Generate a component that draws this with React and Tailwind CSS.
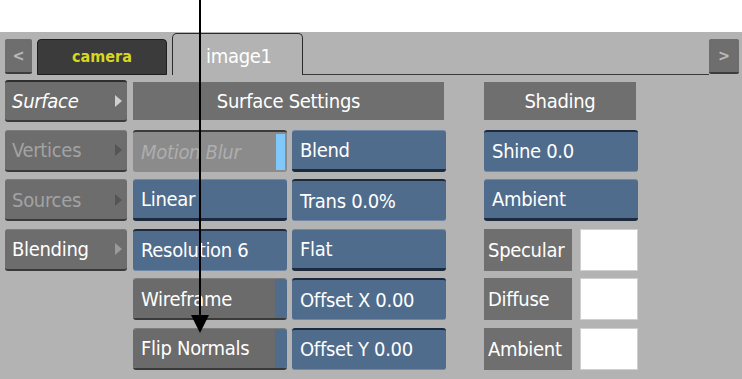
import React from 'react';

const font = { fontFamily: '"DejaVu Sans Condensed", "DejaVu Sans", sans-serif' };

const Tri = ({ color }) => (
  <span
    className="w-0 h-0 border-y-[6px] border-y-transparent border-l-[7px]"
    style={{ borderLeftColor: color }}
  />
);

const SideButton = ({ label, active, dim, italic }) => (
  <div
    className={`h-[42px] flex items-center justify-between pl-[7px] pr-[5px] rounded-[3px] bg-[#6d6d6d] border-b-2 border-b-[#3a3a3a] ${
      active ? 'border-t-2 border-t-[#2e2e2e]' : 'border-t border-t-[#7c7c7c]'
    }`}
  >
    <span
      className={`text-[20px] tracking-[-0.3px] ${italic ? 'italic' : ''} ${dim ? 'text-[#a3a3a3]' : 'text-white'}`}
    >
      {label}
    </span>
    <Tri color={dim ? '#555555' : active ? '#cfcfcf' : '#9a9a9a'} />
  </div>
);

const BlueButton = ({ label, pressed }) => (
  <div
    className={`h-[42px] flex items-center pl-[8px] rounded-[3px] bg-[#506c8c] text-white text-[20px] tracking-[-0.3px] ${
      pressed
        ? 'border-t-2 border-t-[#1d2a3d] border-b border-b-[#6f88a6]'
        : 'border-t border-t-[#6f88a6] border-b-[3px] border-b-[#1d2a3d]'
    }`}
  >
    {label}
  </div>
);

const GrayToggle = ({ label }) => (
  <div className="h-[42px] flex rounded-[3px] overflow-hidden border-b-2 border-b-[#3a3a3a] border-t border-t-[#7d7d7d]">
    <div className="flex-1 flex items-center pl-[8px] bg-[#6b6b6b] text-white text-[20px] tracking-[-0.3px]">{label}</div>
    <div className="w-[12px] bg-[#506c8c]" />
  </div>
);

const ColorRow = ({ label }) => (
  <div className="h-[42px] flex gap-[8px]">
    <div className="w-[88px] flex items-center pl-[4px] bg-[#6f6f6f] text-white text-[20px] tracking-[-0.3px]">{label}</div>
    <div className="flex-1 bg-white border border-[#cfcfcf]" />
  </div>
);

export default function App() {
  return (
    <div className="relative w-[742px] h-[379px] bg-white overflow-hidden" style={font}>
      <div className="mt-[32px] h-[347px] bg-[#b3b3b3]">
        {/* tab row */}
        <div className="h-[43px] flex items-end pl-[5px] pr-[3px]">
          <div className="w-[27px] h-[35px] mb-[1px] flex items-center justify-center bg-[#6e6e6e] rounded-[2px] border-b-2 border-b-[#3d3d3d] text-[#b8b8b8] text-[16px] font-bold">
            &lt;
          </div>
          <div className="ml-[5px] w-[130px] h-[36px] flex items-center justify-center bg-[#3b3b3b] rounded-t-[4px] border border-[#1e1e1e] text-[#d6d81e] text-[16px] font-bold">
            camera
          </div>
          <div className="ml-[5px] w-[131px] h-[42px] flex items-center pl-[33px] pt-[3px] bg-[#b3b3b3] rounded-t-[5px] border border-b-0 border-[#2b2b2b] text-white text-[20px] tracking-[-0.3px]">
            image1
          </div>
          <div className="flex-1 border-b border-[#3a3a3a] h-full" />
          <div className="w-[30px] h-[35px] mb-[1px] flex items-center justify-center bg-[#6e6e6e] rounded-[2px] border-b-2 border-b-[#3d3d3d] text-[#b8b8b8] text-[16px] font-bold">
            &gt;
          </div>
        </div>

        {/* body */}
        <div className="mt-[5px] flex pl-[5px]">
          <div className="w-[122px] flex flex-col gap-[7.5px]">
            <SideButton label="Surface" active italic />
            <SideButton label="Vertices" dim />
            <SideButton label="Sources" dim />
            <SideButton label="Blending" />
          </div>

          <div className="ml-[6px] w-[313px] flex flex-col gap-[7.5px]">
            <div className="h-[42px] flex items-center">
              <div className="w-[311px] h-[38px] flex items-center justify-center bg-[#6f6f6f] text-white text-[20px] tracking-[-0.3px]">
                Surface Settings
              </div>
            </div>
            <div className="grid grid-cols-[154px_154px] gap-x-[5px] gap-y-[7.5px]">
              <div className="h-[42px] flex rounded-[3px] overflow-hidden bg-[#8b8b8b] border-t-2 border-t-[#3b3b3b]">
                <div className="flex-1 flex items-center pl-[8px] italic text-[#aeaeae] text-[20px] tracking-[-0.3px]">Motion Blur</div>
                <div className="w-[9px] my-[2px] mr-[2px] bg-[#80c8fa]" />
              </div>
              <BlueButton label="Blend" />
              <BlueButton label="Linear" />
              <BlueButton label="Trans 0.0%" pressed />
              <BlueButton label="Resolution 6" pressed />
              <BlueButton label="Flat" />
              <GrayToggle label="Wireframe" />
              <BlueButton label="Offset X 0.00" pressed />
              <GrayToggle label="Flip Normals" />
              <BlueButton label="Offset Y 0.00" pressed />
            </div>
          </div>

          <div className="ml-[38px] w-[154px] flex flex-col gap-[7.5px]">
            <div className="h-[42px] flex items-center">
              <div className="w-[152px] h-[38px] flex items-center justify-center bg-[#6f6f6f] text-white text-[20px] tracking-[-0.3px]">
                Shading
              </div>
            </div>
            <BlueButton label="Shine 0.0" pressed />
            <BlueButton label="Ambient" />
            <ColorRow label="Specular" />
            <ColorRow label="Diffuse" />
            <ColorRow label="Ambient" />
          </div>
        </div>
      </div>

      {/* callout arrow */}
      <svg className="absolute left-0 top-0" width="742" height="379">
        <line x1="200" y1="0" x2="200" y2="318" stroke="#000" strokeWidth="2" />
        <polygon points="191,315 209,315 200,333" fill="#000" />
      </svg>
    </div>
  );
}
